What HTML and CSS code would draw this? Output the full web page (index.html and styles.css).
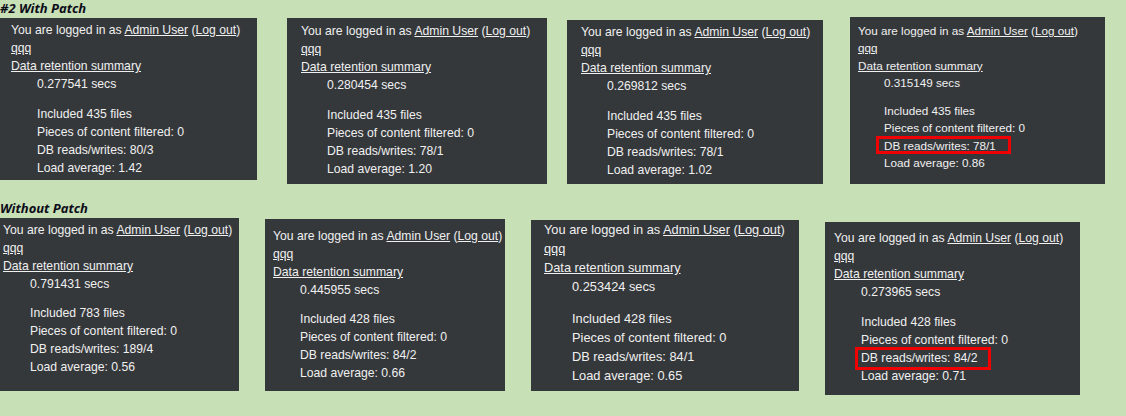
FILE: index.html
```html
<!DOCTYPE html>
<html lang="en">
<head>
    <meta charset="UTF-8">
    <title>Performance info - with and without patch</title>
    <link rel="stylesheet" href="styles.css">
</head>
<body>

<div class="section first">
    <h2>#2 With Patch</h2>
    <div class="row">
        <div class="panel p1">
            <div>You are logged in as <a href="#">Admin User</a> (<a href="#">Log out</a>)</div>
            <div><a href="#">qqq</a></div>
            <div><a href="#">Data retention summary</a></div>
            <div class="perf">
                <div class="secs">0.277541 secs</div>
                <div>Included 435 files</div>
                <div>Pieces of content filtered: 0</div>
                <div>DB reads/writes: 80/3</div>
                <div>Load average: 1.42</div>
            </div>
        </div>
        <div class="panel p2">
            <div>You are logged in as <a href="#">Admin User</a> (<a href="#">Log out</a>)</div>
            <div><a href="#">qqq</a></div>
            <div><a href="#">Data retention summary</a></div>
            <div class="perf">
                <div class="secs">0.280454 secs</div>
                <div>Included 435 files</div>
                <div>Pieces of content filtered: 0</div>
                <div>DB reads/writes: 78/1</div>
                <div>Load average: 1.20</div>
            </div>
        </div>
        <div class="panel p3">
            <div>You are logged in as <a href="#">Admin User</a> (<a href="#">Log out</a>)</div>
            <div><a href="#">qqq</a></div>
            <div><a href="#">Data retention summary</a></div>
            <div class="perf">
                <div class="secs">0.269812 secs</div>
                <div>Included 435 files</div>
                <div>Pieces of content filtered: 0</div>
                <div>DB reads/writes: 78/1</div>
                <div>Load average: 1.02</div>
            </div>
        </div>
        <div class="panel p4">
            <div>You are logged in as <a href="#">Admin User</a> (<a href="#">Log out</a>)</div>
            <div><a href="#">qqq</a></div>
            <div><a href="#">Data retention summary</a></div>
            <div class="perf">
                <div class="secs">0.315149 secs</div>
                <div>Included 435 files</div>
                <div>Pieces of content filtered: 0</div>
                <div><span class="mark">DB reads/writes: 78/1</span></div>
                <div>Load average: 0.86</div>
            </div>
        </div>
    </div>
</div>

<div class="section second">
    <h2>Without Patch</h2>
    <div class="row">
        <div class="panel p5">
            <div>You are logged in as <a href="#">Admin User</a> (<a href="#">Log out</a>)</div>
            <div><a href="#">qqq</a></div>
            <div><a href="#">Data retention summary</a></div>
            <div class="perf">
                <div class="secs">0.791431 secs</div>
                <div>Included 783 files</div>
                <div>Pieces of content filtered: 0</div>
                <div>DB reads/writes: 189/4</div>
                <div>Load average: 0.56</div>
            </div>
        </div>
        <div class="panel p6">
            <div>You are logged in as <a href="#">Admin User</a> (<a href="#">Log out</a>)</div>
            <div><a href="#">qqq</a></div>
            <div><a href="#">Data retention summary</a></div>
            <div class="perf">
                <div class="secs">0.445955 secs</div>
                <div>Included 428 files</div>
                <div>Pieces of content filtered: 0</div>
                <div>DB reads/writes: 84/2</div>
                <div>Load average: 0.66</div>
            </div>
        </div>
        <div class="panel p7">
            <div>You are logged in as <a href="#">Admin User</a> (<a href="#">Log out</a>)</div>
            <div><a href="#">qqq</a></div>
            <div><a href="#">Data retention summary</a></div>
            <div class="perf">
                <div class="secs">0.253424 secs</div>
                <div>Included 428 files</div>
                <div>Pieces of content filtered: 0</div>
                <div>DB reads/writes: 84/1</div>
                <div>Load average: 0.65</div>
            </div>
        </div>
        <div class="panel p8">
            <div>You are logged in as <a href="#">Admin User</a> (<a href="#">Log out</a>)</div>
            <div><a href="#">qqq</a></div>
            <div><a href="#">Data retention summary</a></div>
            <div class="perf">
                <div class="secs">0.273965 secs</div>
                <div>Included 428 files</div>
                <div>Pieces of content filtered: 0</div>
                <div><span class="mark">DB reads/writes: 84/2</span></div>
                <div>Load average: 0.71</div>
            </div>
        </div>
    </div>
</div>

</body>
</html>
```

FILE: styles.css
```css
body {
    margin: 0;
    background-color: #c7e0b5;
    font-family: 'Liberation Sans', Arial, sans-serif;
}

h2 {
    margin: 0;
    font-family: 'Open Sans', sans-serif;
    font-size: 13px;
    font-weight: bold;
    font-style: italic;
    line-height: 17px;
    color: #0d0d1a;
}

.second {
    margin-top: 16px;
}

.row {
    display: flex;
    align-items: flex-start;
}

.panel {
    box-sizing: border-box;
    background-color: #35383b;
    color: #f0f0f0;
    font-size: 12.2px;
    line-height: 18px;
    white-space: nowrap;
}

.panel a {
    color: #f0f0f0;
}

.perf {
    padding-left: 26px;
}

.secs {
    margin-bottom: 12px;
}

.mark {
    display: inline-block;
    border: 3px solid #f00000;
}

/* top row */
.p1 {
    width: 257px;
    height: 162px;
    margin-top: 1px;
    padding: 3px 0 0 11px;
}

.p2 {
    width: 260px;
    height: 166px;
    margin: 1px 0 0 30px;
    padding: 4px 0 0 14px;
}

.p3 {
    width: 256px;
    height: 164px;
    margin: 3px 0 0 20px;
    padding: 3px 0 0 14px;
}

.p4 {
    width: 255px;
    height: 167px;
    margin-left: 27px;
    padding: 5px 0 0 8px;
    font-size: 11.7px;
    line-height: 17.3px;
}

.p4 .secs {
    margin-bottom: 11px;
}

.p4 .mark {
    margin: -3px 0 -3px -8px;
    padding: 2px 12px 0 5px;
    line-height: 10px;
}

/* bottom row */
.p5 {
    width: 239px;
    height: 173px;
    margin-top: 1px;
    padding: 3px 0 0 3px;
}

.p5 .perf {
    padding-left: 27px;
}

.p5 .secs {
    margin-bottom: 11px;
}

.p6 {
    width: 240px;
    height: 172px;
    margin: 2px 0 0 26px;
    padding: 8px 0 0 8px;
}

.p6 .perf {
    padding-left: 27px;
}

.p6 .secs {
    margin-bottom: 11px;
}

.p7 {
    width: 268px;
    height: 171px;
    margin: 3px 0 0 26px;
    padding: 0 0 0 13px;
    font-size: 12.8px;
    line-height: 19px;
}

.p7 .perf {
    padding-left: 28px;
}

.p7 .secs {
    margin-bottom: 13px;
}

.p8 {
    width: 255px;
    height: 173px;
    margin: 5px 0 0 26px;
    padding: 7px 0 0 9px;
}

.p8 .perf {
    padding-left: 27px;
}

.p8 .mark {
    margin: -3px 0 -3px -6px;
    padding: 0 10px 0 3px;
    line-height: 17px;
}
```
